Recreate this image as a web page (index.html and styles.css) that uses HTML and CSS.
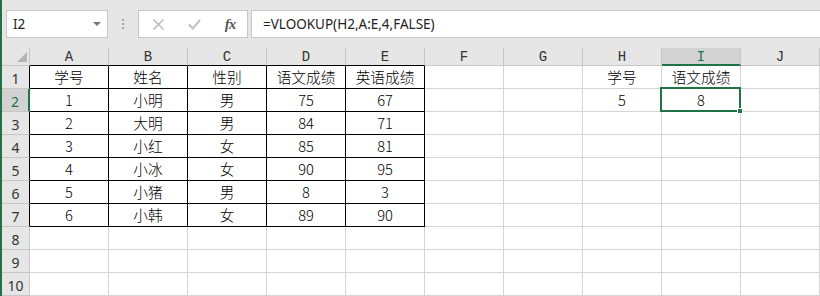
FILE: index.html
```html
<!DOCTYPE html>
<html lang="zh-CN">
<head>
    <meta charset="UTF-8">
    <title>Sheet1</title>
    <link rel="stylesheet" href="styles.css">
</head>
<body>
    <div class="formula-bar">
        <div class="name-box">
            <span>I2</span>
            <span class="caret"></span>
        </div>
        <div class="grip"><i></i><i></i><i></i></div>
        <div class="fx-buttons">
            <svg class="btn-cancel" width="11" height="11" viewBox="0 0 11 11"><path d="M0.5 0.5 L10.5 10.5 M10.5 0.5 L0.5 10.5"/></svg>
            <svg class="btn-enter" width="13" height="11" viewBox="0 0 13 11"><path d="M1 5.5 L4.8 9.5 L12 1"/></svg>
            <span class="fx">fx</span>
        </div>
        <div class="formula">=VLOOKUP(H2,A:E,4,FALSE)</div>
    </div>

    <div class="sheet">
        <!-- header row -->
        <div class="corner"><span class="corner-mark"></span></div>
        <div class="col-head edge">A</div>
        <div class="col-head edge">B</div>
        <div class="col-head edge">C</div>
        <div class="col-head edge">D</div>
        <div class="col-head edge">E</div>
        <div class="col-head">F</div>
        <div class="col-head">G</div>
        <div class="col-head">H</div>
        <div class="col-head active">I</div>
        <div class="col-head">J</div>

        <!-- row 1 -->
        <div class="row-head edge">1</div>
        <div class="cell tb">学号</div>
        <div class="cell tb">姓名</div>
        <div class="cell tb">性别</div>
        <div class="cell tb">语文成绩</div>
        <div class="cell tb">英语成绩</div>
        <div class="cell"></div>
        <div class="cell"></div>
        <div class="cell">学号</div>
        <div class="cell">语文成绩</div>
        <div class="cell"></div>

        <!-- row 2 -->
        <div class="row-head edge active">2</div>
        <div class="cell tb">1</div>
        <div class="cell tb">小明</div>
        <div class="cell tb">男</div>
        <div class="cell tb">75</div>
        <div class="cell tb">67</div>
        <div class="cell"></div>
        <div class="cell"></div>
        <div class="cell">5</div>
        <div class="cell selected">8<span class="sel-box"><span class="fill-handle"></span></span></div>
        <div class="cell"></div>

        <!-- row 3 -->
        <div class="row-head edge">3</div>
        <div class="cell tb">2</div>
        <div class="cell tb">大明</div>
        <div class="cell tb">男</div>
        <div class="cell tb">84</div>
        <div class="cell tb">71</div>
        <div class="cell"></div>
        <div class="cell"></div>
        <div class="cell"></div>
        <div class="cell"></div>
        <div class="cell"></div>

        <!-- row 4 -->
        <div class="row-head edge">4</div>
        <div class="cell tb">3</div>
        <div class="cell tb">小红</div>
        <div class="cell tb">女</div>
        <div class="cell tb">85</div>
        <div class="cell tb">81</div>
        <div class="cell"></div>
        <div class="cell"></div>
        <div class="cell"></div>
        <div class="cell"></div>
        <div class="cell"></div>

        <!-- row 5 -->
        <div class="row-head edge">5</div>
        <div class="cell tb">4</div>
        <div class="cell tb">小冰</div>
        <div class="cell tb">女</div>
        <div class="cell tb">90</div>
        <div class="cell tb">95</div>
        <div class="cell"></div>
        <div class="cell"></div>
        <div class="cell"></div>
        <div class="cell"></div>
        <div class="cell"></div>

        <!-- row 6 -->
        <div class="row-head edge">6</div>
        <div class="cell tb">5</div>
        <div class="cell tb">小猪</div>
        <div class="cell tb">男</div>
        <div class="cell tb">8</div>
        <div class="cell tb">3</div>
        <div class="cell"></div>
        <div class="cell"></div>
        <div class="cell"></div>
        <div class="cell"></div>
        <div class="cell"></div>

        <!-- row 7 -->
        <div class="row-head edge">7</div>
        <div class="cell tb">6</div>
        <div class="cell tb">小韩</div>
        <div class="cell tb">女</div>
        <div class="cell tb">89</div>
        <div class="cell tb">90</div>
        <div class="cell"></div>
        <div class="cell"></div>
        <div class="cell"></div>
        <div class="cell"></div>
        <div class="cell"></div>

        <!-- rows 8-10 -->
        <div class="row-head">8</div>
        <div class="cell"></div><div class="cell"></div><div class="cell"></div><div class="cell"></div><div class="cell"></div>
        <div class="cell"></div><div class="cell"></div><div class="cell"></div><div class="cell"></div><div class="cell"></div>

        <div class="row-head">9</div>
        <div class="cell"></div><div class="cell"></div><div class="cell"></div><div class="cell"></div><div class="cell"></div>
        <div class="cell"></div><div class="cell"></div><div class="cell"></div><div class="cell"></div><div class="cell"></div>

        <div class="row-head">10</div>
        <div class="cell"></div><div class="cell"></div><div class="cell"></div><div class="cell"></div><div class="cell"></div>
        <div class="cell"></div><div class="cell"></div><div class="cell"></div><div class="cell"></div><div class="cell"></div>
    </div>
</body>
</html>
```

FILE: styles.css
```css
*{
    box-sizing: border-box;
}
html, body{
    margin: 0;
    height: 100%;
    overflow: hidden;
}
body{
    border-left: 2px solid #217346;
    background-color: #ffffff;
    font-family: "Noto Sans", "Noto Sans CJK SC", sans-serif;
}

/* formula bar on top */
.formula-bar{
    height: 48px;
    display: flex;
    align-items: flex-start;
    padding: 10px 0 0 4px;
    background-color: #e6e6e6;
}
.name-box{
    width: 102px;
    height: 28px;
    display: flex;
    align-items: center;
    justify-content: space-between;
    padding: 0 6px 0 6px;
    background-color: #ffffff;
    border: 1px solid #c6c6c6;
    font-size: 13.5px;
    color: #222222;
}
.caret{
    width: 0;
    height: 0;
    border: 4px solid transparent;
    border-top: 4px solid #767676;
    border-bottom: 0;
}
.grip{
    width: 30px;
    height: 28px;
    display: flex;
    flex-direction: column;
    align-items: center;
    justify-content: center;
    gap: 2px;
}
.grip i{
    width: 2px;
    height: 2px;
    background-color: #a6a6a6;
}
.fx-buttons{
    width: 110px;
    height: 28px;
    display: grid;
    grid-template-columns: repeat(3, 36px);
    align-items: center;
    justify-items: center;
    padding-left: 1px;
    background-color: #ffffff;
    border: 1px solid #c6c6c6;
}
.btn-cancel path{
    fill: none;
    stroke: #b4b4b4;
    stroke-width: 1.3;
}
.btn-enter path{
    fill: none;
    stroke: #c0c0c0;
    stroke-width: 2;
}
.fx{
    font-family: "Liberation Serif", serif;
    font-style: italic;
    font-weight: bold;
    font-size: 15px;
    color: #595959;
    letter-spacing: -1px;
}
.formula{
    flex: 1;
    height: 28px;
    margin-left: 3px;
    margin-right: -4px;
    display: flex;
    align-items: center;
    padding-left: 11px;
    background-color: #ffffff;
    border: 1px solid #c6c6c6;
    font-size: 13.5px;
    color: #222222;
}

/* the grid */
.sheet{
    display: grid;
    grid-template-columns: 28px repeat(10, 79px);
    grid-template-rows: 18px repeat(10, 23px);
}
.corner, .col-head, .row-head{
    background-color: #e6e6e6;
    border-right: 1px solid #c6c6c6;
    border-bottom: 1px solid #c6c6c6;
    color: #333333;
}
.corner{
    position: relative;
}
.corner-mark{
    position: absolute;
    right: 2px;
    bottom: 3px;
    width: 0;
    height: 0;
    border-style: solid;
    border-width: 0 0 10px 10px;
    border-color: transparent transparent #b4b4b4 transparent;
}
.col-head{
    display: flex;
    align-items: center;
    justify-content: center;
    font-family: "Liberation Mono", monospace;
    font-size: 14px;
    padding-top: 1px;
}
.col-head.edge{
    border-bottom-color: #000000;
}
.col-head.active{
    background-color: #d2d2d2;
    color: #217346;
    border-bottom: 2px solid #217346;
}
.row-head{
    display: flex;
    align-items: flex-end;
    justify-content: center;
    font-size: 14px;
    line-height: 14px;
    padding-bottom: 2px;
}
.row-head.edge{
    border-right-color: #000000;
}
.row-head.active{
    background-color: #d2d2d2;
    color: #217346;
    border-right: 2px solid #217346;
}
.cell{
    display: flex;
    align-items: center;
    justify-content: center;
    border-right: 1px solid #d4d4d4;
    border-bottom: 1px solid #d4d4d4;
    font-family: "Noto Sans CJK SC", sans-serif;
    font-size: 11pt;
    font-weight: 300;
    color: #000000;
    padding-bottom: 1px;
}
.cell.tb{
    border-right-color: #000000;
    border-bottom-color: #000000;
}
.cell.selected{
    position: relative;
}
.sel-box{
    position: absolute;
    top: -2px;
    left: -2px;
    right: -1px;
    bottom: -1px;
    border: 2px solid #217346;
}
.fill-handle{
    position: absolute;
    right: -4px;
    bottom: -4px;
    width: 6px;
    height: 6px;
    background-color: #217346;
    border: 1px solid #ffffff;
}
```
